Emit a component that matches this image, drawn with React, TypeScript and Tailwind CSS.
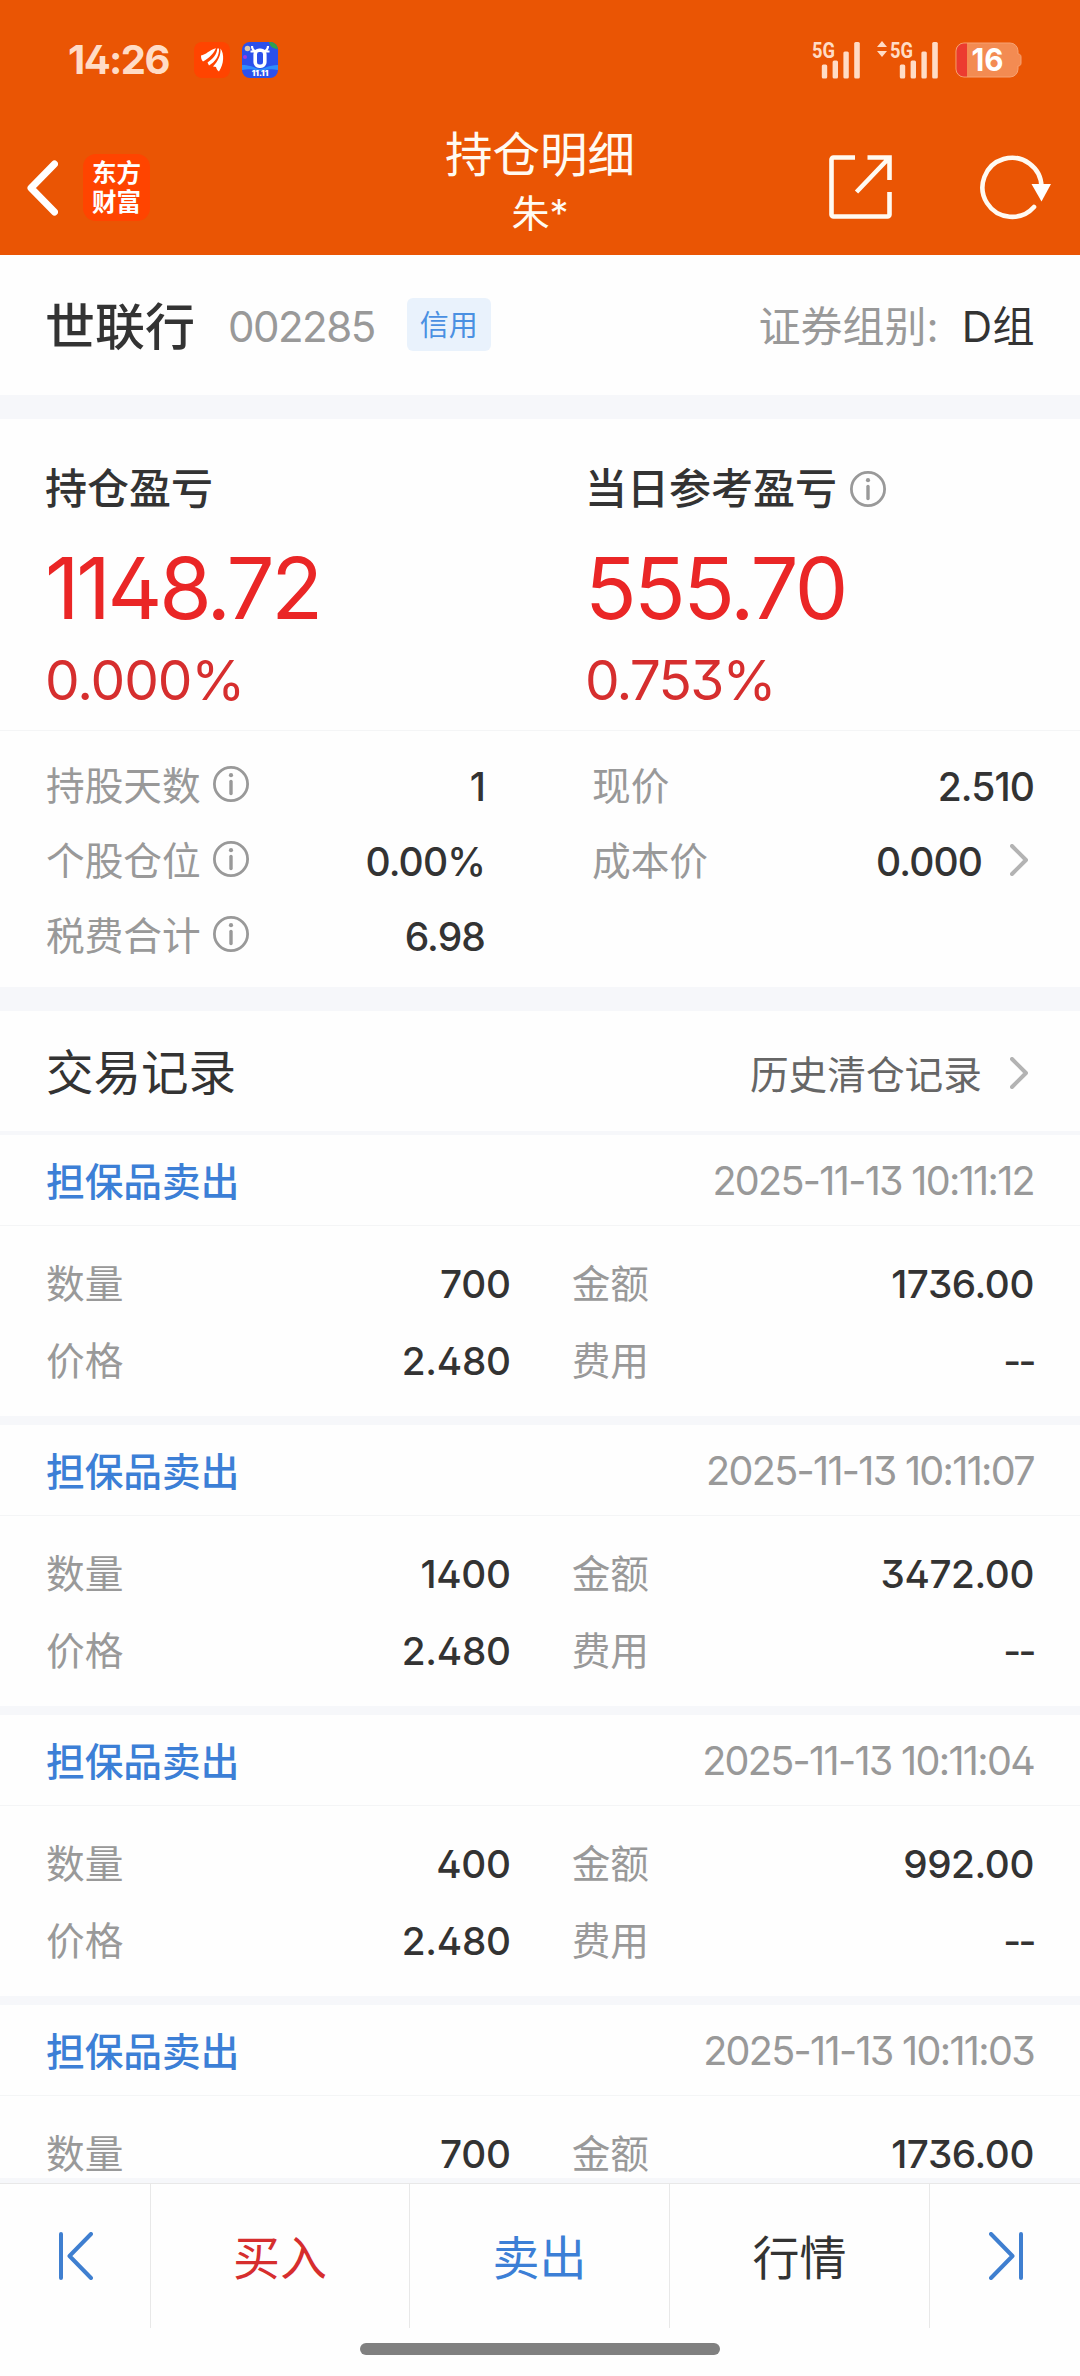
import type { ReactNode } from "react";
import clsx from "clsx";

type Trade = {
  time: string;
  qty: string;
  price?: string;
  amount: string;
  fee?: string;
};

// The last record is scrolled under the bottom bar, only its first row is visible.
const trades: Trade[] = [
  { time: "2025-11-13 10:11:12", qty: "700", price: "2.480", amount: "1736.00", fee: "--" },
  { time: "2025-11-13 10:11:07", qty: "1400", price: "2.480", amount: "3472.00", fee: "--" },
  { time: "2025-11-13 10:11:04", qty: "400", price: "2.480", amount: "992.00", fee: "--" },
  { time: "2025-11-13 10:11:03", qty: "700", amount: "1736.00" },
];

function InfoIcon() {
  return (
    <svg width="36" height="36" viewBox="0 0 36 36" fill="none" className="shrink-0">
      <circle cx="18" cy="18" r="16.6" stroke="#999" strokeWidth="2.8" />
      <circle cx="18" cy="9.2" r="2.1" fill="#999" />
      <path d="M18 15.5v12" stroke="#999" strokeWidth="3.4" strokeLinecap="round" />
    </svg>
  );
}

function ChevronIcon() {
  return (
    <svg width="18" height="32" viewBox="0 0 18 32" fill="none" className="shrink-0">
      <path d="M2 2l14 14L2 30" stroke="#b3b3b3" strokeWidth="4" strokeLinecap="round" strokeLinejoin="round" />
    </svg>
  );
}

/** Four rising bars with the 5G mark in the upper left. */
function Signal() {
  return (
    <svg width="49" height="38" viewBox="0 0 49 38" fill="#ffdcc6" className="shrink-0 overflow-visible">
      <text x="0" y="16.5" fontSize="22" fontWeight="700" textLength="23" lengthAdjust="spacingAndGlyphs" fontFamily="Roboto, sans-serif">
        5G
      </text>
      <rect x="9.8" y="23.5" width="5.4" height="14" rx="1.5" />
      <rect x="20.6" y="19.5" width="5.4" height="18" rx="1.5" />
      <rect x="31.4" y="10.5" width="5.4" height="27" rx="1.5" />
      <rect x="42.2" y="1" width="5.6" height="36.5" rx="1.5" />
    </svg>
  );
}

function StatusBar() {
  return (
    <div className="flex h-[118px] items-center pl-[68px] pr-[58px] pt-0.5">
      <span className="w-[102px] whitespace-nowrap text-[40px] font-bold leading-none tracking-[-1.6px] text-[#ffdcc6]">14:26</span>
      {/* Notification icons */}
      <svg width="36" height="36" viewBox="0 0 36 36" className="ml-6 shrink-0">
        <rect width="36" height="36" rx="8" fill="#ff4400" />
        <path d="M7 13.500C12 13 15 8 22 6.300 20 11 15 16.500 9 19.500 7.500 18 7 16 7 13.500z" fill="#fff" />
        <path d="M23.300 6.500C23 12 19 17 13.500 20.500L15 23.500C21 20 25.500 14 25 6.500z" fill="#fff" />
        <path d="M26.500 6.500C30.500 12 30 22 25 29.500 23.500 28.500 22.500 27 22 25L19 24.500C24 19.500 27 13 26.500 6.500z" fill="#fff" />
      </svg>
      <svg width="36" height="36" viewBox="0 0 36 36" className="ml-3 shrink-0">
        <rect width="36" height="36" rx="8" fill="#2b50ec" />
        <path d="M0 23c10 0 14 4 18 4s8-4 18-4v5c-10-2-14 1-18 1s-8-3-18-1z" fill="#2f8dfa" />
        <circle cx="5.500" cy="6.500" r="2.800" fill="#d9c9b0" />
        <path d="M27 0h1a8 8 0 0 1 8 7c-4 0-8-2-9-7z" fill="#2fa04c" />
        <circle cx="3" cy="15" r="2" fill="#a03be0" />
        <rect x="13.200" y="8.200" width="9.600" height="16" rx="4" fill="none" stroke="#fff" strokeWidth="3.600" />
        <path d="M10 4c0 3 1 4.500 4 5.500M26 4c0 3-1 4.500-4 5.500M8.500 9.500h5M22.500 9.500h5" stroke="#fff" strokeWidth="2.200" fill="none" />
        <text x="18" y="34.300" fontSize="8" fontWeight="900" fill="#fff" textAnchor="middle">11.11</text>
      </svg>
      <span className="ml-auto">
        <Signal />
      </span>
      <svg width="10" height="16" viewBox="0 0 10 16" fill="#ffdcc6" className="mb-[23px] ml-4 mr-[3px]">
        <path d="M5 0l5 6H0zM5 16l5-6H0z" />
      </svg>
      <Signal />
      <svg width="67" height="36" viewBox="0 0 67 36" className="ml-4">
        <path d="M9 1h46a8 8 0 0 1 8 8v3c2 0 3 1 3 3v6c0 2-1 3-3 3v3a8 8 0 0 1-8 8H9a8 8 0 0 1-8-8V9a8 8 0 0 1 8-8z" fill="#f38b52" stroke="#f7a273" />
        <path d="M12 1.500H9A7.500 7.500 0 0 0 1.500 9v18A7.500 7.500 0 0 0 9 34.500h3z" fill="#ec3b30" />
        <text x="16.500" y="29.200" fontSize="31" fontWeight="700" fill="#fff" textLength="32" lengthAdjust="spacingAndGlyphs">16</text>
      </svg>
    </div>
  );
}

function TitleBar() {
  return (
    <div className="grid h-[137px] grid-cols-[1fr_auto_1fr] text-[#fffaf2]">
      <div className="flex items-start pl-[26px] pt-9">
        <svg width="32" height="56" viewBox="0 0 32 56" fill="none" className="mt-[6px]">
          <path d="M28.500 4L5 28l23.500 24" stroke="#fff" strokeWidth="7" strokeLinecap="round" strokeLinejoin="round" />
        </svg>
        <div className="ml-[25px] flex h-[67px] w-[67px] flex-col items-center justify-center rounded-[13px] bg-[#ff4400] text-[24.500px] font-bold leading-[29px] text-white">
          <span>东方</span>
          <span>财富</span>
        </div>
      </div>
      <div className="flex flex-col items-center pt-[13px]">
        <h1 className="text-[47.500px] leading-[48px]">持仓明细</h1>
        <p className="mt-[12px] text-[38px] leading-[44px]">朱*</p>
      </div>
      <div className="flex items-start justify-end gap-[88px] pr-[28px] pt-[37px]">
        <svg width="63" height="64" viewBox="0 0 63 64" fill="none" stroke="currentColor" strokeWidth="4.600">
          <path d="M26 2.500H4.500a2 2 0 0 0-2 2v55a2 2 0 0 0 2 2h54a2 2 0 0 0 2-2V37" />
          <path d="M38.500 2.500h22V25M60 3L27.500 37" />
        </svg>
        <svg width="72" height="66" viewBox="0 0 72 66" fill="none">
          <path d="M61.500 32A29.500 29.500 0 1 0 54 52" stroke="currentColor" strokeWidth="4.600" strokeLinecap="round" />
          <path d="M51.500 29h19.500L61.500 46.500z" fill="#fff" />
        </svg>
      </div>
    </div>
  );
}

function StatRow({ label, info, children }: { label: string; info?: boolean; children: ReactNode }) {
  return (
    <div className="flex h-[75px] items-center">
      <span className="text-[38.700px] text-[#999]">{label}</span>
      {info && (
        <span className="mb-[5px] ml-3">
          <InfoIcon />
        </span>
      )}
      <span className="ml-auto flex items-center text-[39px] font-medium tracking-[-0.9px]">{children}</span>
    </div>
  );
}

function TradeCard({ trade }: { trade: Trade }) {
  const rows = [["数量", trade.qty, "金额", trade.amount]];
  if (trade.price && trade.fee) {
    rows.push(["价格", trade.price, "费用", trade.fee]);
  }

  return (
    <article className="border-b-[9px] border-[#f6f7fa]">
      <header className="flex h-[91px] items-center justify-between border-b-[1.500px] border-[#f4f5f6] px-[46px] pt-[4px]">
        <h3 className="text-[38.700px] font-medium text-[#3c7fd6]">担保品卖出</h3>
        <time className="text-[39.500px] tracking-[-1.67px] text-[#999]">{trade.time}</time>
      </header>
      <div className="px-[46px] pb-4 pt-5 text-[38.700px]">
        {rows.map(([label, value, label2, value2]) => (
          <div key={label} className="flex h-[77px] items-center">
            <span className="text-[#999]">{label}</span>
            <span className="ml-auto w-[300px] text-right font-medium tracking-[-0.3px]">{value}</span>
            <span className="ml-[61px] text-[#999]">{label2}</span>
            <span
              className={clsx(
                "w-[385px] text-right font-medium",
                value2 === "--" ? "tracking-[-2.5px]" : "tracking-[-0.4px]",
              )}
            >
              {value2}
            </span>
          </div>
        ))}
      </div>
    </article>
  );
}

export default function App() {
  return (
    <div className="flex h-[2376px] w-[1080px] flex-col overflow-hidden bg-[#fefefe] font-['Inter','Noto_Sans_CJK_SC',sans-serif] leading-none text-[#333] [font-feature-settings:'cv02','cv09']">
      <div className="shrink-0 bg-[#ea5504]">
        <StatusBar />
        <TitleBar />
      </div>

      {/* Stock */}
      <section className="flex h-[140px] shrink-0 items-center px-[45px] pt-[4px]">
        <h2 className="text-[50px] font-medium">世联行</h2>
        <span className="ml-[33px] text-[42px] tracking-[-1.500px] text-[#999]">002285</span>
        <span className="mb-[5px] ml-[32px] flex h-[53px] w-[84px] items-center justify-center rounded-md bg-[#e9f2fc] pt-0.5 text-[29px] text-[#4a90e2]">
          信用
        </span>
        <span className="ml-auto text-[42px] text-[#999]">证券组别:</span>
        <span className="ml-[23px] text-[42px] tracking-[0.5px]">D组</span>
      </section>

      {/* Profit and loss */}
      <section className="grid h-[336px] shrink-0 grid-cols-[540px_1fr] border-b-[1.500px] border-t-[24px] border-b-[#f4f5f6] border-t-[#f6f7fa] pl-[45px] pt-[49px]">
        <div>
          <p className="text-[42px] font-medium">持仓盈亏</p>
          <p className="mt-[36px] text-[85px] tracking-[-3.3px] text-[#ea2626]">1148.72</p>
          <p className="mt-[22px] text-[55px] tracking-[-1.1px] text-[#d62e2e]">0.000%</p>
        </div>
        <div>
          <p className="flex items-center gap-[13px] text-[42px] font-medium">
            当日参考盈亏
            <InfoIcon />
          </p>
          <p className="mt-[36px] text-[85px] tracking-[-2.6px] text-[#ea2626]">555.70</p>
          <p className="mt-[22px] text-[55px] tracking-[-1.8px] text-[#d62e2e]">0.753%</p>
        </div>
      </section>

      <section className="grid h-[256px] shrink-0 grid-cols-[439px_442px] gap-x-[107px] px-[46px] pt-[18px]">
        <div>
          <StatRow label="持股天数" info>1</StatRow>
          <StatRow label="个股仓位" info>0.00%</StatRow>
          <StatRow label="税费合计" info>6.98</StatRow>
        </div>
        <div>
          <StatRow label="现价">2.510</StatRow>
          <StatRow label="成本价">
            0.000
            <span className="mb-1 ml-7 mr-[6px]">
              <ChevronIcon />
            </span>
          </StatRow>
        </div>
      </section>

      {/* Trades */}
      <section className="min-h-0 flex-1 overflow-hidden border-t-[24px] border-[#f6f7fa]">
        <div className="flex h-[124px] items-center border-b-4 border-[#f6f7fa] px-[46px]">
          <h2 className="pt-[3px] text-[47.500px]">交易记录</h2>
          <span className="ml-auto pt-[8px] text-[38.700px] text-[#666]">历史清仓记录</span>
          <span className="ml-7 mr-[6px] pt-1">
            <ChevronIcon />
          </span>
        </div>
        {trades.map((trade) => (
          <TradeCard key={trade.time} trade={trade} />
        ))}
      </section>

      <footer className="shrink-0 border-t-[5px] border-[#f6f7fa]">
        <nav className="grid h-[145px] grid-cols-[151px_259px_260px_260px_1fr] divide-x divide-[#e8e8e8] border-t border-[#e8e8e8] text-[47px]">
          <div className="flex items-center justify-center pl-0.5">
            <svg width="34" height="48" viewBox="0 0 34 48" fill="none" stroke="#3f7fd0" strokeWidth="4" strokeLinecap="round" strokeLinejoin="round">
              <path d="M2 2v44M32 2L10.500 24 32 46" />
            </svg>
          </div>
          <div className="flex items-center justify-center pt-0.5 text-[#d62e2e]">买入</div>
          <div className="flex items-center justify-center pt-0.5 text-[#3c7fd6]">卖出</div>
          <div className="flex items-center justify-center pt-0.5">行情</div>
          <div className="flex items-center justify-center pl-0.5">
            <svg width="34" height="48" viewBox="0 0 34 48" fill="none" stroke="#3f7fd0" strokeWidth="4" strokeLinecap="round" strokeLinejoin="round">
              <path d="M32 2v44M2 2l21.500 22L2 46" />
            </svg>
          </div>
        </nav>
        <div className="flex h-12 justify-center pt-[15px]">
          <div className="h-3 w-[360px] rounded-full bg-[#808080]" />
        </div>
      </footer>
    </div>
  );
}
